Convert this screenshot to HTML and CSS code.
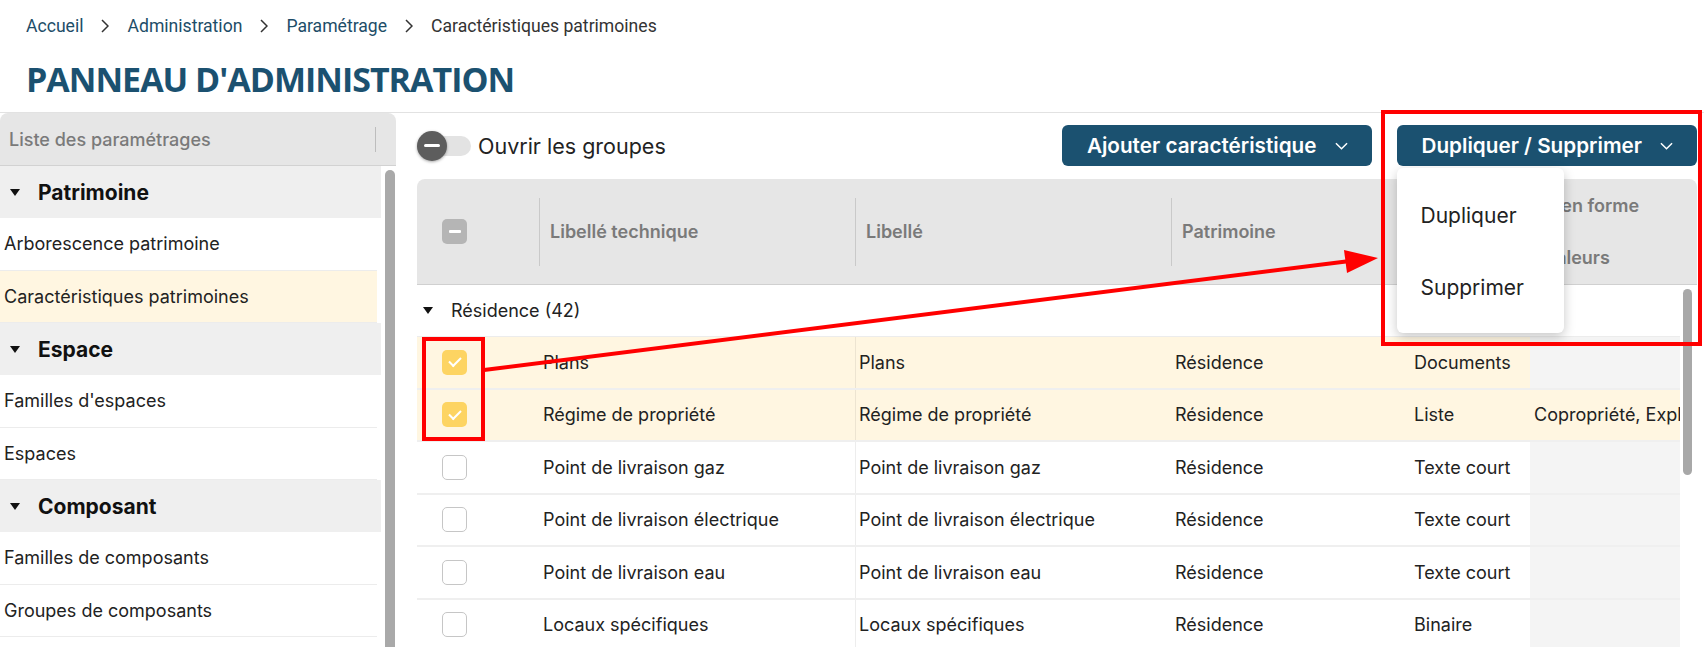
FILE: index.html
```html
<!DOCTYPE html>
<html lang="fr">
<head>
    <meta charset="UTF-8">
    <title>Panneau d'administration</title>
    <link rel="stylesheet" href="styles.css">
</head>
<body>
    <header class="page-head">
        <nav class="crumbs">
            <a>Accueil</a>
            <svg class="crumb-sep" viewBox="0 0 8 14"><path d="M1 1l6 6-6 6"/></svg>
            <a>Administration</a>
            <svg class="crumb-sep" viewBox="0 0 8 14"><path d="M1 1l6 6-6 6"/></svg>
            <a>Paramétrage</a>
            <svg class="crumb-sep" viewBox="0 0 8 14"><path d="M1 1l6 6-6 6"/></svg>
            <span class="current">Caractéristiques patrimoines</span>
        </nav>
        <h1 class="title">PANNEAU D'ADMINISTRATION</h1>
    </header>

    <div class="layout">
        <aside class="sidebar">
            <div class="side-head">
                <span>Liste des paramétrages</span>
                <i class="side-sep"></i>
            </div>
            <div class="side-body">
                <div class="side-list">
                    <div class="grp"><span class="caret"></span>Patrimoine</div>
                    <div class="item">Arborescence patrimoine</div>
                    <div class="item active">Caractéristiques patrimoines</div>
                    <div class="grp"><span class="caret"></span>Espace</div>
                    <div class="item">Familles d'espaces</div>
                    <div class="item">Espaces</div>
                    <div class="grp"><span class="caret"></span>Composant</div>
                    <div class="item">Familles de composants</div>
                    <div class="item">Groupes de composants</div>
                    <div class="item">Composants</div>
                </div>
                <div class="side-scroll"></div>
            </div>
        </aside>

        <main class="content">
            <div class="toolbar">
                <div class="toggle">
                    <span class="switch"><span class="knob"></span></span>
                    <span>Ouvrir les groupes</span>
                </div>
                <div class="actions">
                    <div class="dd">
                        <button class="btn">Ajouter caractéristique
                            <svg class="chev" viewBox="0 0 14 8"><path d="M1 1l6 6 6-6"/></svg>
                        </button>
                    </div>
                    <div class="dd">
                        <button class="btn">Dupliquer / Supprimer
                            <svg class="chev" viewBox="0 0 14 8"><path d="M1 1l6 6 6-6"/></svg>
                        </button>
                        <div class="menu">
                            <div class="menu-item">Dupliquer</div>
                            <div class="menu-item">Supprimer</div>
                        </div>
                    </div>
                </div>
            </div>

            <div class="grid">
                <div class="grid-head">
                    <div class="hcell"><span class="cb cb-part"></span></div>
                    <div class="hcell sep">Libellé technique</div>
                    <div class="hcell sep">Libellé</div>
                    <div class="hcell sep">Patrimoine</div>
                    <div class="hcell">Type</div>
                    <div class="hcell two">
                        <span>Mise en forme</span>
                        <span>Valeurs</span>
                    </div>
                </div>
                <div class="grid-body">
                    <div class="rows">
                        <div class="group-row"><span class="caret"></span>Résidence (42)</div>

                        <div class="row sel">
                            <div class="cell cbcell"><span class="cb on"></span></div>
                            <div class="cell">Plans</div>
                            <div class="cell c2">Plans</div>
                            <div class="cell">Résidence</div>
                            <div class="cell">Documents</div>
                            <div class="cell empty"></div>
                        </div>
                        <div class="row sel">
                            <div class="cell cbcell"><span class="cb on"></span></div>
                            <div class="cell">Régime de propriété</div>
                            <div class="cell c2">Régime de propriété</div>
                            <div class="cell">Résidence</div>
                            <div class="cell">Liste</div>
                            <div class="cell">Copropriété, Exploitation, Pleine propriété</div>
                        </div>
                        <div class="row">
                            <div class="cell cbcell"><span class="cb"></span></div>
                            <div class="cell">Point de livraison gaz</div>
                            <div class="cell c2">Point de livraison gaz</div>
                            <div class="cell">Résidence</div>
                            <div class="cell">Texte court</div>
                            <div class="cell empty"></div>
                        </div>
                        <div class="row">
                            <div class="cell cbcell"><span class="cb"></span></div>
                            <div class="cell">Point de livraison électrique</div>
                            <div class="cell c2">Point de livraison électrique</div>
                            <div class="cell">Résidence</div>
                            <div class="cell">Texte court</div>
                            <div class="cell empty"></div>
                        </div>
                        <div class="row">
                            <div class="cell cbcell"><span class="cb"></span></div>
                            <div class="cell">Point de livraison eau</div>
                            <div class="cell c2">Point de livraison eau</div>
                            <div class="cell">Résidence</div>
                            <div class="cell">Texte court</div>
                            <div class="cell empty"></div>
                        </div>
                        <div class="row">
                            <div class="cell cbcell"><span class="cb"></span></div>
                            <div class="cell">Locaux spécifiques</div>
                            <div class="cell c2">Locaux spécifiques</div>
                            <div class="cell">Résidence</div>
                            <div class="cell">Binaire</div>
                            <div class="cell empty"></div>
                        </div>
                    </div>
                    <div class="vscroll"><div class="thumb"></div></div>
                </div>
            </div>
        </main>
    </div>

    <!-- annotations rouges par-dessus la capture -->
    <svg class="annot" viewBox="0 0 1704 647">
        <rect x="1383" y="112" width="317" height="232"/>
        <rect x="424" y="339" width="59" height="100"/>
        <line x1="484" y1="370" x2="1350" y2="261"/>
        <polygon class="head" points="1378,258 1347,273 1344,250"/>
    </svg>
</body>
</html>
```

FILE: styles.css
```css
body {
    margin: 0;
    width: 1704px;
    height: 647px;
    overflow: hidden;
    position: relative;
    background: #ffffff;
    color: #222222;
    font-family: Inter, "Noto Sans", sans-serif;
}

/* en-tete */
.page-head {
    height: 113px;
    box-sizing: border-box;
    padding: 14px 26px 0;
    border-bottom: 1px solid #e2e2e2;
}

.crumbs {
    display: flex;
    align-items: center;
    height: 24px;
    font-family: Roboto, sans-serif;
    font-size: 17.6px;
    color: #1d4d68;
}

.crumb-sep {
    width: 8px;
    height: 14px;
    margin: 0 18px;
    fill: none;
    stroke: #333333;
    stroke-width: 1.5;
}

.crumbs .current {
    color: #333333;
}

.title {
    margin: 18px 0 0;
    font-family: "Open Sans", sans-serif;
    font-weight: 700;
    font-size: 34px;
    line-height: 46px;
    letter-spacing: -1px;
    color: #1b5170;
}

.layout {
    display: grid;
    grid-template-columns: 396px 1280px;
    column-gap: 21px;
    height: 534px;
}

/* colonne de gauche */
.side-head {
    display: flex;
    align-items: center;
    height: 53px;
    box-sizing: border-box;
    padding-left: 9px;
    background: #e6e6e6;
    border-bottom: 1px solid #d2d2d2;
    border-radius: 8px 8px 0 0;
    font-size: 18px;
    font-weight: 500;
    color: #7a7a7a;
}

.side-sep {
    width: 1px;
    height: 25px;
    margin-left: auto;
    margin-right: 20px;
    background: #bdbdbd;
}

.side-body {
    display: flex;
    gap: 4px;
    height: 481px;
    overflow: hidden;
}

.side-list {
    width: 381px;
}

.side-scroll {
    width: 10px;
    margin-top: 4px;
    background: #a9a9a9;
    border-radius: 5px 5px 0 0;
}

.grp {
    display: flex;
    align-items: center;
    height: 52px;
    padding-left: 10px;
    background: #efefef;
    font-size: 21px;
    font-weight: 700;
    color: #111111;
}

.caret {
    width: 0;
    height: 0;
    border-left: 5.5px solid transparent;
    border-right: 5.5px solid transparent;
    border-top: 7px solid #111111;
    margin-right: 18px;
}

.item {
    display: flex;
    align-items: center;
    height: 52.5px;
    box-sizing: border-box;
    margin-right: 4px;
    padding-left: 4px;
    border-bottom: 1px solid #ececec;
    font-size: 18px;
}

.item.active {
    background: #fff6e1;
}

/* zone principale */
.toolbar {
    display: flex;
    align-items: center;
    height: 41px;
    margin: 12px 0 13px;
}

.toggle {
    display: flex;
    align-items: center;
    font-size: 21.5px;
    color: #222222;
}

.switch {
    display: flex;
    align-items: center;
    width: 54px;
    height: 20px;
    margin-right: 7px;
    border-radius: 10px;
    background: #e3e3e3;
}

.knob {
    display: flex;
    align-items: center;
    justify-content: center;
    flex: none;
    width: 30px;
    height: 30px;
    border-radius: 50%;
    background: #5d5d5d;
    box-shadow: 0 1px 3px rgba(0, 0, 0, 0.35);
}

.knob::after {
    content: "";
    width: 16px;
    height: 3px;
    border-radius: 2px;
    background: #ffffff;
}

.actions {
    display: flex;
    gap: 25px;
    margin-left: auto;
}

.dd {
    position: relative;
}

.btn {
    display: flex;
    align-items: center;
    gap: 18px;
    height: 41px;
    padding: 0 24px 0 25px;
    border: none;
    border-radius: 6px;
    background: #1b5170;
    color: #ffffff;
    font-family: Inter, sans-serif;
    font-size: 20.7px;
    font-weight: 600;
}

.chev {
    width: 13px;
    height: 8px;
    fill: none;
    stroke: #ffffff;
    stroke-width: 1.6;
}

.menu {
    position: absolute;
    top: 43px;
    left: 0;
    z-index: 5;
    width: 167px;
    padding: 11px 0 10px;
    background: #ffffff;
    border-radius: 6px;
    box-shadow: 0 4px 12px rgba(0, 0, 0, 0.22);
}

.menu-item {
    display: flex;
    align-items: center;
    height: 72px;
    padding-left: 24px;
    font-size: 21px;
    color: #222222;
}

/* tableau */
.grid-head,
.row {
    display: grid;
    grid-template-columns: 122px 316px 316px 239px 120px 150px;
}

.grid-head {
    height: 106px;
    box-sizing: border-box;
    padding-right: 17px;
    background: #e6e6e6;
    border-bottom: 1px solid #d0d0d0;
    border-radius: 8px 8px 0 0;
}

.hcell {
    display: flex;
    align-items: center;
    padding-left: 11px;
    font-size: 18px;
    font-weight: 600;
    color: #7a7a7a;
    white-space: nowrap;
}

.hcell:first-child {
    padding-left: 25px;
}

.hcell.sep {
    background: linear-gradient(#c9c9c9, #c9c9c9) no-repeat left center / 1px 68px;
}

.hcell.two {
    flex-direction: column;
    justify-content: space-around;
    align-items: center;
    padding: 0 56px 0 0;
}

.grid-body {
    display: flex;
}

.rows {
    width: 1263px;
}

.vscroll {
    width: 17px;
}

.vscroll .thumb {
    width: 9px;
    height: 186px;
    margin: 4px 0 0 3px;
    border-radius: 5px;
    background: #a8a8a8;
}

.group-row {
    display: flex;
    align-items: center;
    height: 52px;
    box-sizing: border-box;
    padding-left: 6px;
    border-bottom: 1px solid #ececec;
    font-size: 18px;
}

.group-row .caret {
    margin-right: 18px;
}

.row {
    height: 52.5px;
    box-sizing: border-box;
    border-bottom: 2px solid #efefef;
    font-size: 18px;
}

.row.sel {
    background: #fff6e1;
}

.cell {
    display: flex;
    align-items: center;
    padding-left: 4px;
    white-space: nowrap;
    overflow: hidden;
}

.cell.c2 {
    border-left: 1px solid rgba(0, 0, 0, 0.07);
    padding-left: 3px;
}

.cell.empty {
    background: #f4f4f4;
}

.cbcell {
    padding-left: 25px;
}

.cb {
    width: 25px;
    height: 25px;
    box-sizing: border-box;
    border: 1.5px solid #c6c6c6;
    border-radius: 5px;
    background: #ffffff;
    display: flex;
    align-items: center;
    justify-content: center;
}

.cb.on {
    border: none;
    background: #fdd462;
}

.cb.on::after {
    content: "";
    width: 10px;
    height: 5px;
    margin-top: -3px;
    border-left: 2px solid #ffffff;
    border-bottom: 2px solid #ffffff;
    transform: rotate(-45deg);
}

.cb.cb-part {
    border: none;
    background: #b5b5b5;
}

.cb.cb-part::after {
    content: "";
    width: 12px;
    height: 3px;
    border-radius: 1px;
    background: #ffffff;
}

/* annotations */
.annot {
    position: absolute;
    left: 0;
    top: 0;
    width: 1704px;
    height: 647px;
    z-index: 10;
    pointer-events: none;
}

.annot rect,
.annot line {
    fill: none;
    stroke: #ff0000;
    stroke-width: 4;
}

.annot .head {
    fill: #ff0000;
}
```
